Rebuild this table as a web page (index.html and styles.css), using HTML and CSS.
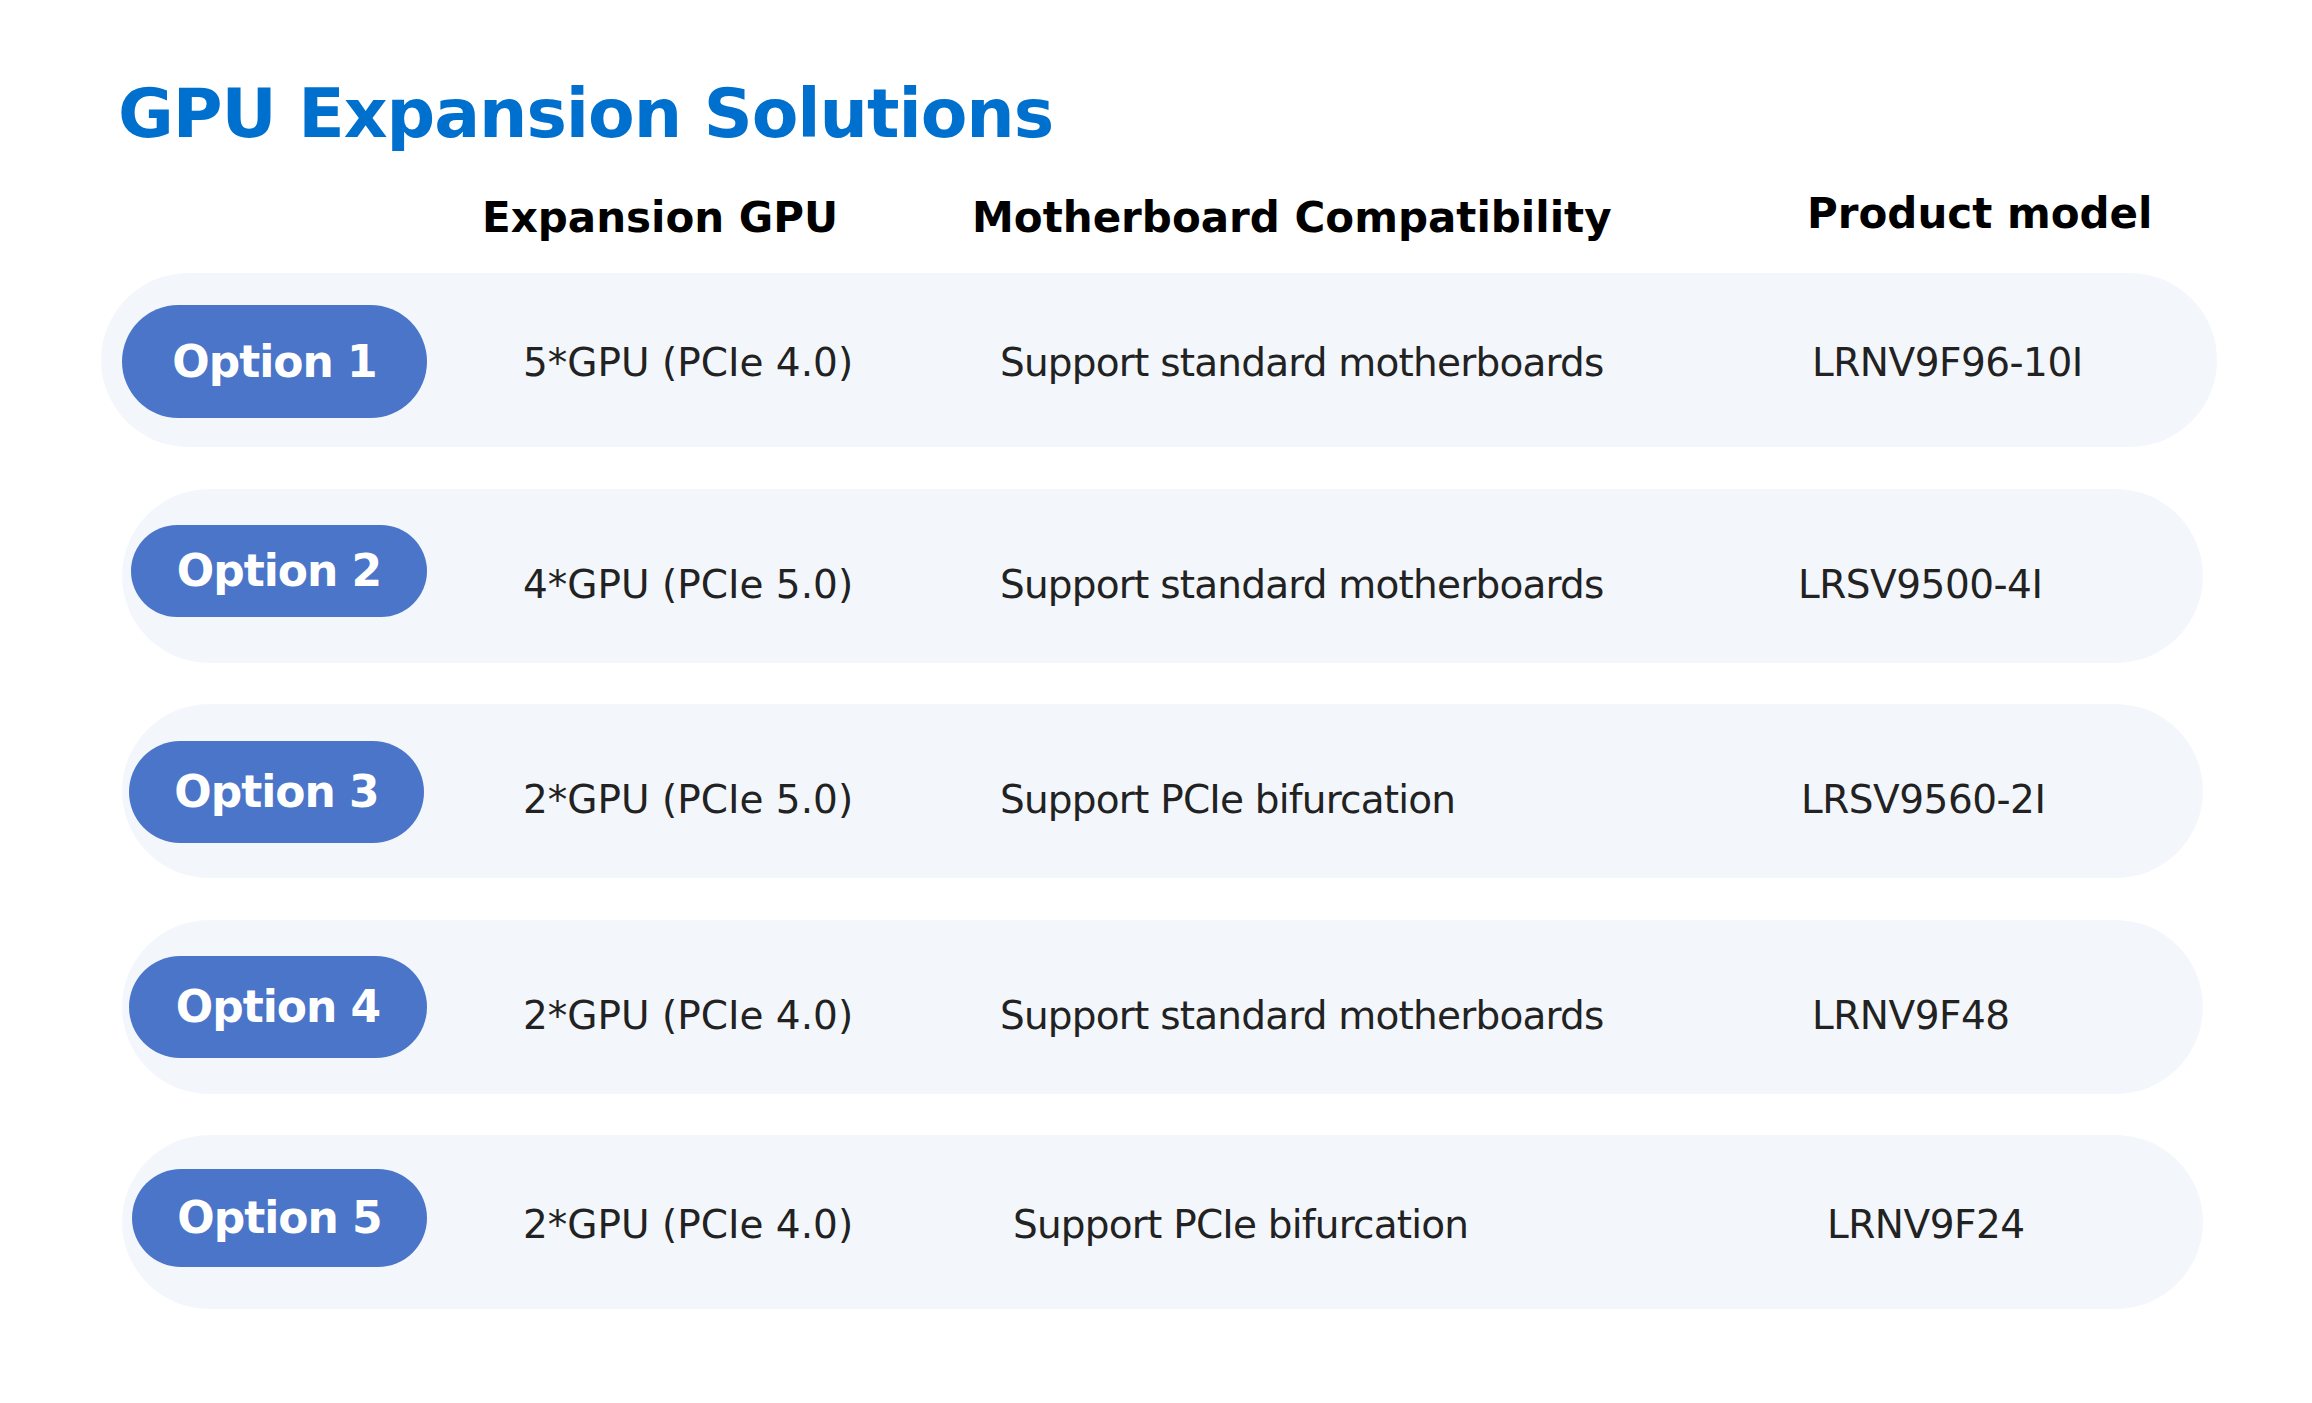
FILE: index.html
```html
<!DOCTYPE html>
<html lang="en">
<head>
<meta charset="utf-8">
<title>GPU Expansion Solutions</title>
<link rel="stylesheet" href="styles.css">
</head>
<body>
<main class="page">
  <h1 class="title">GPU Expansion Solutions</h1>
  <div class="head">
    <div class="h-gpu">Expansion GPU</div>
    <div class="h-mb">Motherboard Compatibility</div>
    <div class="h-model">Product model</div>
  </div>
  <div class="rows">
    <div class="row r1">
      <div class="slot"><span class="pill">Option 1</span></div>
      <div class="cell c-gpu">5*GPU (PCIe 4.0)</div>
      <div class="cell c-mb">Support standard motherboards</div>
      <div class="cell c-model">LRNV9F96-10I</div>
    </div>
    <div class="row r2">
      <div class="slot"><span class="pill">Option 2</span></div>
      <div class="cell c-gpu">4*GPU (PCIe 5.0)</div>
      <div class="cell c-mb">Support standard motherboards</div>
      <div class="cell c-model">LRSV9500-4I</div>
    </div>
    <div class="row r3">
      <div class="slot"><span class="pill">Option 3</span></div>
      <div class="cell c-gpu">2*GPU (PCIe 5.0)</div>
      <div class="cell c-mb">Support PCIe bifurcation</div>
      <div class="cell c-model">LRSV9560-2I</div>
    </div>
    <div class="row r4">
      <div class="slot"><span class="pill">Option 4</span></div>
      <div class="cell c-gpu">2*GPU (PCIe 4.0)</div>
      <div class="cell c-mb">Support standard motherboards</div>
      <div class="cell c-model">LRNV9F48</div>
    </div>
    <div class="row r5">
      <div class="slot"><span class="pill">Option 5</span></div>
      <div class="cell c-gpu">2*GPU (PCIe 4.0)</div>
      <div class="cell c-mb">Support PCIe bifurcation</div>
      <div class="cell c-model">LRNV9F24</div>
    </div>
  </div>
</main>
</body>
</html>
```
FILE: styles.css
```css
* { box-sizing: border-box; }

html, body {
  margin: 0;
  padding: 0;
  background: #ffffff;
}

body {
  font-family: "DejaVu Sans", Verdana, sans-serif;
  color: #222222;
}

.page {
  width: 2312px;
  min-height: 1403px;
  padding-top: 80px;
}

.title {
  margin: 0 0 0 118px;
  font-size: 68px;
  line-height: 68px;
  font-weight: bold;
  letter-spacing: -1.05px;
  color: #0070ce;
}

.head {
  display: flex;
  margin-top: 49px;
  padding-left: 482px;
  font-size: 42px;
  line-height: 42px;
  font-weight: bold;
  color: #000000;
}

.h-gpu { width: 490px; }
.h-mb { width: 835px; }
.h-model { margin-top: -4px; }

.rows {
  display: flex;
  flex-direction: column;
  gap: 41.5px;
  margin-top: 34px;
}

.row {
  --slot: 401px;
  --pill-x: 9px;
  --pill-w: 296px;
  --pill-h: 92px;
  --pill-dy: 0px;
  --text-dy: 17px;
  --mb-dx: 0px;
  --model-dx: 0px;
  display: flex;
  align-items: center;
  height: 174px;
  margin-left: 122px;
  width: 2081px;
  border-radius: 87px;
  background: #f3f7fc;
}

.r1 {
  --slot: 422px;
  --pill-x: 21px;
  --pill-w: 305px;
  --pill-h: 113px;
  --pill-dy: 3px;
  --text-dy: 5px;
  margin-left: 101px;
  width: 2116px;
}
.r2 { --pill-x: 9px; --pill-w: 296px; --pill-h: 92px; --pill-dy: -10px; --model-dx: -14px; }
.r3 { --pill-x: 7px; --pill-w: 295px; --pill-h: 102px; --pill-dy: 1px; --model-dx: -11px; }
.r4 { --pill-x: 7px; --pill-w: 298px; --pill-h: 102px; --pill-dy: 1px; }
.r5 { --pill-x: 10px; --pill-w: 295px; --pill-h: 98px; --pill-dy: -9px; --text-dy: 5px; --mb-dx: 13px; --model-dx: 15px; }

.slot {
  width: var(--slot);
  flex: none;
  display: flex;
  align-items: center;
  padding-left: var(--pill-x);
}

.pill {
  display: flex;
  align-items: center;
  justify-content: center;
  width: var(--pill-w);
  height: var(--pill-h);
  margin-top: var(--pill-dy);
  border-radius: 60px;
  background: #4a75c9;
  color: #ffffff;
  font-size: 44px;
  line-height: 44px;
  font-weight: bold;
  letter-spacing: -1px;
}

.cell {
  flex: none;
  font-size: 39px;
  line-height: 39px;
  margin-top: var(--text-dy);
  white-space: nowrap;
}

.c-gpu { width: 477px; }
.c-mb { width: 812px; padding-left: var(--mb-dx); letter-spacing: -0.8px; }
.c-model { margin-left: var(--model-dx); letter-spacing: -0.5px; }
```
